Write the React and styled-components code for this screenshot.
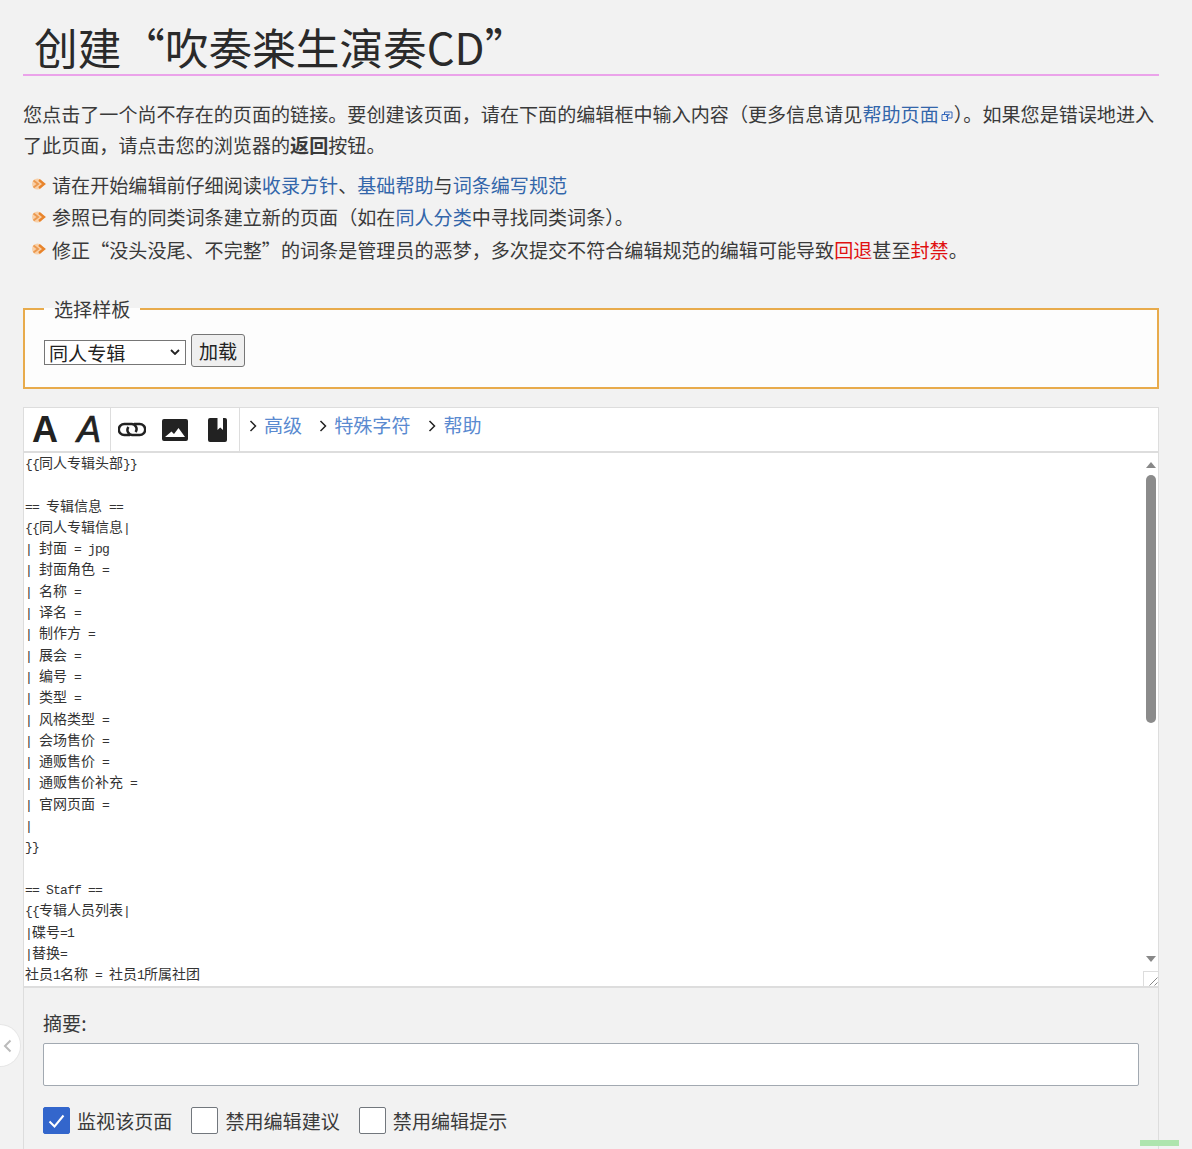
import React from "react";
import styled, { createGlobalStyle } from "styled-components";

/////////////Styling/////////////////
const Global = createGlobalStyle`
  html, body { margin: 0; padding: 0; height: 1149px; overflow: hidden; background: #f2f2f2; }
  body {
    font-family: "Noto Sans CJK SC", "Noto Sans", sans-serif;
    color: #333;
    text-spacing-trim: space-all;
  }
`;

const Page = styled.main`
  height: 1149px;
  overflow: hidden;
  padding: 0 33px 0 23px;
`;

const Title = styled.h1`
  margin: 0;
  height: 76px;
  padding: 14px 0 0 11px;
  box-sizing: border-box;
  font-size: 43.65px;
  line-height: 64px;
  font-weight: 400;
  color: #2a2a2a;
  border-bottom: 2px solid #eba3ea;
`;

const Intro = styled.p`
  margin: 22px 0 0;
  font-size: 19.08px;
  line-height: 31px;
  color: #3a3a3a;
`;

const A = styled.a`
  color: ${(p) => (p.$red ? "#e01010" : "#3366aa")};
  text-decoration: none;
`;

// closing bracket sits tight against the full stop that follows it
const Bracket = styled.span`
  letter-spacing: -9.5px;
`;

const Rules = styled.ul`
  list-style: none;
  margin: 8px 0 0;
  padding: 0 0 0 9px;
`;

const Rule = styled.li`
  display: flex;
  align-items: center;
  gap: 6px;
  font-size: 19.08px;
  height: 32.5px;
  color: #3a3a3a;
`;

const Templates = styled.fieldset`
  margin: 33px 0 0;
  padding: 12px 19px 19px;
  height: 90.5px;
  box-sizing: border-box;
  border: 2px solid #e8ab4c;
  background: #fdfdfd;
  display: flex;
  align-items: flex-start;
`;

const Legend = styled.legend`
  font-size: 19.08px;
  line-height: 20px;
  padding: 0 10px;
  color: #3a3a3a;
`;

const Row = styled.div`
  display: flex;
  align-items: center;
  gap: 5px;
  margin-top: 3px;
`;

const Select = styled.select`
  appearance: none;
  width: 142px;
  height: 25px;
  margin-top: 4px;
  font-family: inherit;
  font-size: 19.08px;
  line-height: 23px;
  padding: 0 0 0 4px;
  color: #222;
  border: 1px solid #767676;
  background: #fff url("data:image/svg+xml,%3Csvg xmlns='http://www.w3.org/2000/svg' width='10' height='6'%3E%3Cpath d='M1 1l4 4 4-4' fill='none' stroke='%23222' stroke-width='1.800'/%3E%3C/svg%3E") no-repeat right 5px center;
`;

const LoadButton = styled.button`
  width: 54px;
  height: 33px;
  padding: 0;
  font-family: inherit;
  font-size: 19.08px;
  color: #222;
  background: #efefef;
  border: 1px solid #767676;
  border-radius: 3px;
`;

const Editor = styled.section`
  margin-top: 18px;
  height: 780px;
  border: solid #ddd;
  border-width: 1px 1px 0;
  display: flex;
  flex-direction: column;
`;

const Toolbar = styled.div`
  display: flex;
  height: 43px;
  background: #fff;
  border-bottom: 2px solid #ddd;
  flex-shrink: 0;
`;

const ToolGroup = styled.div`
  display: flex;
  align-items: center;
  width: ${(p) => p.$w}px;
  box-sizing: border-box;
  border-right: 1px solid #ddd;
`;

const Letter = styled.span`
  width: 43px;
  margin-left: ${(p) => (p.$italic ? 2 : 0)}px;
  text-align: center;
  font-family: "Liberation Sans", sans-serif;
  font-size: 36px;
  line-height: 43px;
  font-weight: ${(p) => (p.$italic ? 400 : 700)};
  font-style: ${(p) => (p.$italic ? "italic" : "normal")};
  -webkit-text-stroke: ${(p) => (p.$italic ? "0.7px #222" : "0")};
  color: #222;
`;

const ToolIcon = styled.svg`
  display: block;
  flex-shrink: 0;
  margin-left: ${(p) => p.$ml}px;
`;

const Tabs = styled.div`
  display: flex;
  align-items: flex-start;
`;

const Tab = styled.a`
  display: flex;
  align-items: center;
  height: 32px;
  margin-left: ${(p) => p.$ml}px;
  gap: 7px;
  font-size: 19.08px;
  color: #5a8ad0;
  text-decoration: none;
`;

const TabChevron = styled.svg`
  margin-top: 3px;
`;

const SourceFrame = styled.div`
  position: relative;
  height: 535px;
  flex-shrink: 0;
  box-sizing: border-box;
  overflow: hidden;
  background: #fff;
  border-bottom: 2px solid #ddd;
`;

const Source = styled.div`
  margin-top: -1px;
  padding-left: 1px;
  color: #333;
  font-size: 14px;
`;

const Line = styled.div`
  height: 21.3px;
  line-height: 21.3px;
  white-space: pre;
`;

const Ascii = styled.span`
  font-family: "Liberation Mono", monospace;
  font-size: 13px;
  letter-spacing: -0.8px;
`;

const ScrollArrow = styled.svg`
  position: absolute;
  right: 2px;
  top: ${(p) => p.$top}px;
`;

const ScrollThumb = styled.div`
  position: absolute;
  right: 2px;
  top: 22px;
  width: 10px;
  height: 248px;
  border-radius: 5px;
  background: #8b8b8b;
`;

const Resizer = styled.div`
  position: absolute;
  right: 0;
  bottom: 0;
  width: 15px;
  height: 15px;
  box-sizing: border-box;
  background: #fff;
  border: solid #ddd;
  border-width: 1px 0 0 1px;
`;

const Grip = styled.svg`
  display: block;
`;

const Options = styled.div`
  padding: 0 19px;
`;

const SummaryLabel = styled.label`
  display: block;
  margin-top: 21px;
  font-size: 19.08px;
  line-height: 27px;
  color: #3a3a3a;
`;

const SummaryInput = styled.input`
  display: block;
  width: 100%;
  height: 43px;
  box-sizing: border-box;
  margin-top: 7px;
  background: #fff;
  border: 1px solid #a2a9b1;
  border-radius: 2px;
`;

const Checks = styled.div`
  display: flex;
  align-items: center;
  margin-top: 21px;
`;

const CheckLabel = styled.label`
  display: flex;
  align-items: center;
  gap: 7px;
  margin-right: 19px;
  font-size: 19.08px;
  line-height: 27px;
  color: #3a3a3a;
`;

const Box = styled.span`
  display: flex;
  align-items: center;
  justify-content: center;
  width: 27px;
  height: 27px;
  box-sizing: border-box;
  border-radius: 2px;
  background: ${(p) => (p.$on ? "#3366cc" : "#fff")};
  border: 1px solid ${(p) => (p.$on ? "#3366cc" : "#72777d")};
`;

const SideHandle = styled.div`
  position: absolute;
  left: 0;
  top: 1024px;
  width: 21px;
  height: 43px;
  display: flex;
  align-items: center;
  padding-left: 3px;
  box-sizing: border-box;
  background: #fff;
  border: 1px solid #e6e6e6;
  border-left: 0;
  border-radius: 0 22px 22px 0;
`;

const GreenBar = styled.div`
  position: absolute;
  left: 1140px;
  top: 1140px;
  width: 39px;
  height: 6px;
  background: #aee5ae;
`;

////////////////Data////////////////////
const lines = [
  "{{同人专辑头部}}", "", "== 专辑信息 ==", "{{同人专辑信息|", "| 封面 = jpg", "| 封面角色 =",
  "| 名称 =", "| 译名 =", "| 制作方 =", "| 展会 =", "| 编号 =", "| 类型 =", "| 风格类型 =",
  "| 会场售价 =", "| 通贩售价 =", "| 通贩售价补充 =", "| 官网页面 =", "|", "}}", "",
  "== Staff ==", "{{专辑人员列表|", "|碟号=1", "|替换=", "社员1名称 = 社员1所属社团",
];

// latin and CJK have different advance widths in the source box
const SourceLine = ({ text }) => (
  <Line>
    {text.split(/([\x20-\x7e]+)/).map((part, i) =>
      i % 2 ? <Ascii key={i}>{part}</Ascii> : part
    )}
  </Line>
);

const Bullet = () => (
  <svg width="14" height="12" viewBox="0 0 14 12">
    <circle cx="5.500" cy="6" r="5.500" fill="#f8d0a8" />
    <path d="M1.500 2.500L6 6 1.500 9.500" fill="none" stroke="#ec9a50" strokeWidth="2" />
    <path d="M7 2L12 6 7 10" fill="none" stroke="#e8842c" strokeWidth="2.400" />
  </svg>
);

const Chevron = () => (
  <TabChevron width="8" height="12" viewBox="0 0 8 12">
    <path d="M1.500 1l5 5-5 5" fill="none" stroke="#222" strokeWidth="1.500" />
  </TabChevron>
);

const ExternalIcon = () => (
  <svg width="12" height="11" viewBox="0 0 12 11" style={{ margin: "0 1px 0 2px" }}>
    <path d="M1 3.500h5.500v6H1z M3.500 3.500V1h7.500v6H6.500" fill="none" stroke="#36b" strokeWidth="1" />
    <path d="M5 6l3.500-3" stroke="#36b" strokeWidth="1.200" />
  </svg>
);

const Check = () => (
  <svg width="17" height="14" viewBox="0 0 17 14">
    <path d="M1.500 7.500l5 5L15.500 1.500" fill="none" stroke="#fff" strokeWidth="2" />
  </svg>
);

////////////////App////////////////////
const App = () => (
  <Page lang="zh-CN">
    <Global />
    <Title>创建“吹奏楽生演奏CD”</Title>
    <Intro>
      您点击了一个尚不存在的页面的链接。要创建该页面，请在下面的编辑框中输入内容（更多信息请见
      <A href="#">帮助页面<ExternalIcon /></A>
      <Bracket>）</Bracket>。如果您是错误地进入了此页面，请点击您的浏览器的<b>返回</b>按钮。
    </Intro>
    <Rules>
      <Rule>
        <Bullet />
        <span>请在开始编辑前仔细阅读<A href="#">收录方针</A>、<A href="#">基础帮助</A>与<A href="#">词条编写规范</A></span>
      </Rule>
      <Rule>
        <Bullet />
        <span>参照已有的同类词条建立新的页面（如在<A href="#">同人分类</A>中寻找同类词条<Bracket>）</Bracket>。</span>
      </Rule>
      <Rule>
        <Bullet />
        <span>修正“没头没尾、不完整”的词条是管理员的恶梦，多次提交不符合编辑规范的编辑可能导致<A $red href="#">回退</A>甚至<A $red href="#">封禁</A>。</span>
      </Rule>
    </Rules>

    <Templates>
      <Legend>选择样板</Legend>
      <Row>
        <Select defaultValue="album">
          <option value="album">同人专辑</option>
        </Select>
        <LoadButton>加载</LoadButton>
      </Row>
    </Templates>

    <Editor>
      <Toolbar>
        <ToolGroup $w={87}>
          <Letter>A</Letter>
          <Letter $italic>A</Letter>
        </ToolGroup>
        <ToolGroup $w={129}>
          <ToolIcon $ml={7} width="28" height="15" viewBox="0 0 28 15">
            <path d="M17.500 10A5 5 0 0 0 13 2H6.300a5.500 5.500 0 0 0 0 11H12" fill="none" stroke="#222" strokeWidth="2.500" />
            <path d="M10.500 5A5 5 0 0 0 15 13h6.700a5.500 5.500 0 0 0 0-11H16" fill="none" stroke="#222" strokeWidth="2.500" />
          </ToolIcon>
          <ToolIcon $ml={16} width="26" height="22" viewBox="0 0 26 22">
            <path fillRule="evenodd" d="M2 0h22a2 2 0 0 1 2 2v18a2 2 0 0 1-2 2H2a2 2 0 0 1-2-2V2a2 2 0 0 1 2-2zM3 18h20l-6.500-9-4.500 6-2.500-2.500z" fill="#222" />
          </ToolIcon>
          <ToolIcon $ml={20} width="19" height="24" viewBox="0 0 19 24">
            <path fillRule="evenodd" d="M2 0h7.500v12l2.700-2.500L15 12V0h2a2 2 0 0 1 2 2v20a2 2 0 0 1-2 2H2a2 2 0 0 1-2-2V2a2 2 0 0 1 2-2z" fill="#222" />
          </ToolIcon>
        </ToolGroup>
        <Tabs>
          <Tab $ml={9} href="#"><Chevron />高级</Tab>
          <Tab $ml={17} href="#"><Chevron />特殊字符</Tab>
          <Tab $ml={18} href="#"><Chevron />帮助</Tab>
        </Tabs>
      </Toolbar>
      <SourceFrame>
        <Source role="textbox" aria-multiline="true">
          {lines.map((text, i) => <SourceLine key={i} text={text} />)}
        </Source>
        <ScrollArrow $top={9} width="10" height="6" viewBox="0 0 10 6"><path d="M5 0l5 6H0z" fill="#888" /></ScrollArrow>
        <ScrollThumb />
        <ScrollArrow $top={503} width="10" height="6" viewBox="0 0 10 6"><path d="M5 6l5-6H0z" fill="#888" /></ScrollArrow>
        <Resizer>
          <Grip width="14" height="14" viewBox="0 0 14 14">
            <path d="M5.500 13.500l8-8M10.500 13.500l3-3" stroke="#888" strokeWidth="1" />
          </Grip>
        </Resizer>
      </SourceFrame>
      <Options>
        <SummaryLabel htmlFor="summary">摘要:</SummaryLabel>
        <SummaryInput id="summary" type="text" />
        <Checks>
          <CheckLabel><Box $on><Check /></Box>监视该页面</CheckLabel>
          <CheckLabel><Box />禁用编辑建议</CheckLabel>
          <CheckLabel><Box />禁用编辑提示</CheckLabel>
        </Checks>
      </Options>
    </Editor>
    <SideHandle>
      <svg width="9" height="14" viewBox="0 0 9 14">
        <path d="M7.500 1.500L2 7l5.500 5.500" fill="none" stroke="#bbb" strokeWidth="2" />
      </svg>
    </SideHandle>
    <GreenBar />
  </Page>
);

export default App;
